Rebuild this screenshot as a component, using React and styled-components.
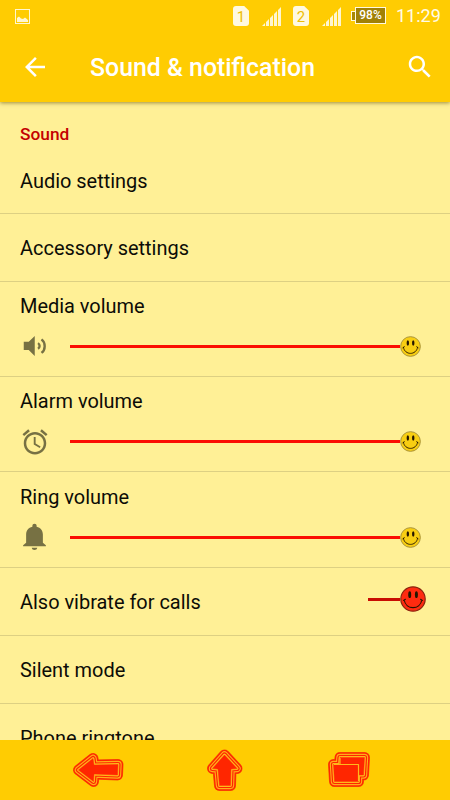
import React from "react";
import styled, { createGlobalStyle } from "styled-components";

const GlobalStyle = createGlobalStyle`
  * {
    box-sizing: border-box;
  }
  body {
    margin: 0;
    font-family: Roboto, "Liberation Sans", sans-serif;
  }
  svg {
    display: block;
    flex: none;
  }
`;

const Screen = styled.div`
  width: 450px;
  height: 800px;
  display: flex;
  flex-direction: column;
  overflow: hidden;
  background: #fff096;
  color: #0c0c06;
`;

const Header = styled.header`
  flex: none;
  height: 101.5px;
  background: #ffcc02;
  color: #fff;
  box-shadow: 0 1px 4px rgba(90, 75, 0, 0.6);
  z-index: 1;
`;

const StatusBar = styled.div`
  height: 31px;
  display: flex;
  align-items: center;
  padding: 1px 9px 0 15px;
`;

const StatusIcons = styled.div`
  display: flex;
  align-items: center;
  margin-left: auto;
`;

const Sim = styled.div`
  width: 16px;
  height: 20px;
  margin-right: 13px;
  border-radius: 3px;
  background: #fff9e0;
  color: #eebe05;
  clip-path: polygon(0 0, 70% 0, 100% 24%, 100% 100%, 0 100%);
  font-size: 15px;
  line-height: 22px;
  text-align: center;
`;

const Signal = styled.svg`
  margin-right: ${(props) => props.$gap}px;
`;

const Battery = styled.div`
  display: flex;
  align-items: center;
  margin-right: 10px;
  &::before {
    content: "";
    width: 3px;
    height: 8px;
    border: 1px solid #fff9e0;
    border-right: 0;
    background: #a98803;
  }
`;

const BatteryLevel = styled.div`
  width: 31px;
  height: 17px;
  margin-top: -1px;
  border: 1px solid #fff9e0;
  background: #a18106;
  font-size: 12px;
  font-weight: 500;
  line-height: 15px;
  text-align: center;
`;

const Clock = styled.span`
  width: 45px;
  font-size: 18px;
  line-height: 30px;
  color: #fffbea;
  white-space: nowrap;
`;

const Toolbar = styled.div`
  height: 71px;
  display: flex;
  align-items: center;
  padding: 0 15px 0 20px;
`;

const Title = styled.h1`
  flex: 1;
  margin: 2px 0 0 40px;
  font-size: 24.85px;
  font-weight: 500;
  line-height: 30px;
`;

const Content = styled.main`
  flex: 1;
  min-height: 0;
  overflow: hidden;
`;

const SectionTitle = styled.h2`
  height: 44.5px;
  margin: 0;
  padding: 21px 20px 0;
  color: #c40000;
  font-size: 17.3px;
  font-weight: 500;
  line-height: 22px;
`;

const Row = styled.div`
  height: ${(props) => props.$height || 68}px;
  display: flex;
  align-items: center;
  justify-content: space-between;
  padding: 2px 24px 0 20px;
  border-bottom: 1px solid #ddd083;
  font-size: 19.95px;
  line-height: 24px;
`;

const VolumeRow = styled.div`
  height: 95.4px;
  padding: 12.6px 29.5px 0 20px;
  border-bottom: 1px solid #ddd083;
  font-size: 19.95px;
  line-height: 24px;
`;

const Slider = styled.div`
  display: flex;
  align-items: center;
  height: 30px;
  margin-top: 13.3px;
`;

const Track = styled.div`
  flex: ${(props) => (props.$width ? "none" : 1)};
  width: ${(props) => props.$width || "auto"};
  height: 3px;
  margin-left: ${(props) => props.$left || 0};
  background: ${(props) => props.$color || "#fb0d03"};
`;

const Toggle = styled.div`
  display: flex;
  align-items: center;
  margin-top: -6px;
`;

const NavBar = styled.nav`
  flex: none;
  height: 60px;
  display: flex;
  justify-content: space-between;
  padding: 0 66px 0 68px;
  background: #ffcc02;
`;

const Face = ({ size, color, rim }) => (
  <svg width={size} height={size} viewBox="0 0 26 26">
    <circle cx="13" cy="13" r="12.2" fill={color} stroke={rim} strokeWidth="1.2" />
    <ellipse cx="9.7" cy="8.7" rx="1.5" ry="3.4" fill="#241600" />
    <ellipse cx="16.4" cy="8.7" rx="1.5" ry="3.4" fill="#241600" />
    <path
      d="M3.6 14.5 5.4 13.3M4.2 14C5.8 24.2 20.2 24.2 21.8 14M20.6 13.3 22.4 14.5"
      fill="none"
      stroke="#241600"
      strokeWidth="1.1"
      strokeLinecap="round"
    />
  </svg>
);

const SignalIcon = ({ gap }) => (
  <Signal $gap={gap} width="19" height="19" viewBox="0 0 19 19">
    <path
      d="M0 19 3 16V19ZM4 15 7 12V19H4ZM8 11 11 8V19H8ZM12 7 15 4V19H12ZM16 3 19 0V19H16Z"
      fill="#fff6d0"
    />
  </Signal>
);

const ICON_PATHS = {
  alarm:
    "M22 5.72l-4.6-3.86-1.29 1.53 4.6 3.86L22 5.72zM7.88 3.39L6.6 1.86 2 5.71l1.29 1.53 4.59-3.85zM12.5 8H11v6l4.75 2.85.75-1.23-4-2.37V8zM12 4c-4.97 0-9 4.03-9 9s4.02 9 9 9c4.97 0 9-4.03 9-9s-4.03-9-9-9zm0 16c-3.87 0-7-3.13-7-7s3.13-7 7-7 7 3.13 7 7-3.13 7-7 7z",
  bell: "M11.6 22.3c1.2 0 2-.7 2.2-1.8H9.4c.2 1.1 1 1.8 2.2 1.8zM18.3 16.5V9.9c0-3.3-1.8-5.5-5-6.2V3c0-1-.7-1.7-1.7-1.7S9.9 2 9.9 3v.7C6.7 4.4 4.9 6.6 4.9 9.9V16.5L2.5 18.6v.8h18.2v-.8z",
};

const SettingIcon = ({ name }) => (
  <svg width="30" height="30" viewBox="0 0 24 24" fill="#777143">
    {name === "volume" ? (
      <>
        <path d="M3 8.5V15.2H7L11.8 19.9V4L7 8.5Z" />
        <path
          d="M14.4 9.7C16.1 10.8 16.1 13.1 14.4 14.2M17.2 6.7C20.6 9.3 20.6 14.9 17.2 17.5"
          fill="none"
          stroke="#777143"
          strokeWidth="1.9"
        />
      </>
    ) : (
      <path d={ICON_PATHS[name]} />
    )}
  </svg>
);

// outlines are stacked strokes, widest first
const OUTLINES = [
  { color: "#f65a05", width: 11 },
  { color: "#ff2600", width: 10 },
  { color: "#ffae18", width: 7.4 },
  { color: "#ff2600", width: 5.2 },
  { color: "#ffb81c", width: 2.8 },
  { color: "#ff2600", width: 0.4 },
];

const NavIcon = ({ d, children }) => (
  <svg width="60" height="60" viewBox="0 0 60 60" strokeLinejoin="round">
    {OUTLINES.map(({ color, width }) => (
      <path key={width} d={d} fill="#ff2600" stroke={color} strokeWidth={width} />
    ))}
    {children}
  </svg>
);

const Volume = ({ label, icon }) => (
  <VolumeRow>
    {label}
    <Slider>
      <SettingIcon name={icon} />
      <Track $left="20px" />
      <Face size={21} color="#f8ce12" rim="#a89238" />
    </Slider>
  </VolumeRow>
);

const App = () => {
  return (
    <Screen>
      <GlobalStyle />
      <Header>
        <StatusBar>
          <svg width="15" height="15" viewBox="0 0 15 15">
            <rect x=".5" y=".5" width="14" height="14" fill="none" stroke="#fff6d0" />
            <path d="M2 13V9L4 7.5 6 9.5 8 10 10 8.5 13 11V13Z" fill="#fff6d0" />
          </svg>
          <StatusIcons>
            <Sim>1</Sim>
            <SignalIcon gap={12} />
            <Sim>2</Sim>
            <SignalIcon gap={10} />
            <Battery>
              <BatteryLevel>98%</BatteryLevel>
            </Battery>
            <Clock>11:29</Clock>
          </StatusIcons>
        </StatusBar>
        <Toolbar>
          <svg width="30" height="30" viewBox="0 0 24 24" fill="#fff">
            <path d="M20 11H7.83l5.59-5.59L12 4l-8 8 8 8 1.41-1.41L7.83 13H20v-2z" />
          </svg>
          <Title>Sound &amp; notification</Title>
          <svg width="30" height="30" viewBox="0 0 24 24" fill="#fff">
            <path d="M15.5 14h-.79l-.28-.27C15.41 12.59 16 11.11 16 9.5 16 5.91 13.09 3 9.5 3S3 5.91 3 9.5 5.91 16 9.5 16c1.61 0 3.09-.59 4.23-1.57l.27.28v.79l5 4.99L20.49 19l-4.99-5zm-6 0C7.01 14 5 11.99 5 9.5S7.01 5 9.5 5 14 7.01 14 9.5 11.99 14 9.5 14z" />
          </svg>
        </Toolbar>
      </Header>
      <Content>
        <SectionTitle>Sound</SectionTitle>
        <Row>Audio settings</Row>
        <Row $height={67.5}>Accessory settings</Row>
        <Volume label="Media volume" icon="volume" />
        <Volume label="Alarm volume" icon="alarm" />
        <Volume label="Ring volume" icon="bell" />
        <Row>
          Also vibrate for calls
          <Toggle>
            <Track $width="32px" $color="#c80d02" />
            <Face size={26} color="#ff2b10" rim="#8b2510" />
          </Toggle>
        </Row>
        <Row>Silent mode</Row>
        <Row>Phone ringtone</Row>
      </Content>
      <NavBar>
        <NavIcon d="M10.5 30 25 18.5 26 25 50 24.5 49.5 35 26 34 25.5 41.5Z" />
        <NavIcon d="M28.5 15 41 28.5 35 29 34.5 45.5H23.5L22 29 16.5 28.5Z" />
        <NavIcon d="M16 17.5H40.5L39.5 35H34.5V41.5H10.5L9.5 24.5H15.5Z">
          <path
            d="M10 24.5H34.5V41M16 24V18"
            fill="none"
            stroke="#ffb81c"
            strokeWidth="1.2"
          />
        </NavIcon>
      </NavBar>
    </Screen>
  );
};

export default App;
